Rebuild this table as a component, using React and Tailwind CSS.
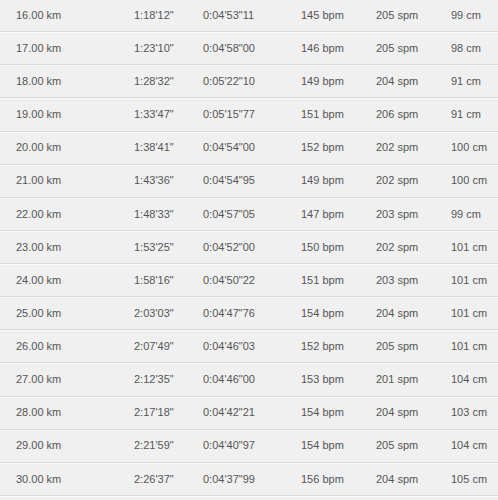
const rows = [
	['16.00 km', '1:18\'12"', '0:04\'53"11', '145 bpm', '205 spm', '99 cm'],
	['17.00 km', '1:23\'10"', '0:04\'58"00', '146 bpm', '205 spm', '98 cm'],
	['18.00 km', '1:28\'32"', '0:05\'22"10', '149 bpm', '204 spm', '91 cm'],
	['19.00 km', '1:33\'47"', '0:05\'15"77', '151 bpm', '206 spm', '91 cm'],
	['20.00 km', '1:38\'41"', '0:04\'54"00', '152 bpm', '202 spm', '100 cm'],
	['21.00 km', '1:43\'36"', '0:04\'54"95', '149 bpm', '202 spm', '100 cm'],
	['22.00 km', '1:48\'33"', '0:04\'57"05', '147 bpm', '203 spm', '99 cm'],
	['23.00 km', '1:53\'25"', '0:04\'52"00', '150 bpm', '202 spm', '101 cm'],
	['24.00 km', '1:58\'16"', '0:04\'50"22', '151 bpm', '203 spm', '101 cm'],
	['25.00 km', '2:03\'03"', '0:04\'47"76', '154 bpm', '204 spm', '101 cm'],
	['26.00 km', '2:07\'49"', '0:04\'46"03', '152 bpm', '205 spm', '101 cm'],
	['27.00 km', '2:12\'35"', '0:04\'46"00', '153 bpm', '201 spm', '104 cm'],
	['28.00 km', '2:17\'18"', '0:04\'42"21', '154 bpm', '204 spm', '103 cm'],
	['29.00 km', '2:21\'59"', '0:04\'40"97', '154 bpm', '205 spm', '104 cm'],
	['30.00 km', '2:26\'37"', '0:04\'37"99', '156 bpm', '204 spm', '105 cm'],
];

export default function App() {
	return (
		<div className="w-[498px] h-[500px] overflow-hidden bg-[#f0f0f0]">
			{/* Split table */}
			<div className="-mt-px">
				{rows.map((row, i) => (
					<div
						key={i}
						className="grid grid-cols-[118px_69px_98px_75px_75px_1fr] items-center h-[33.13px] pl-4 border-b border-b-[#d9d9d9] shadow-[0_1px_0_#fafafa] text-[11px] text-[#555] font-['Liberation_Sans',Arial,sans-serif]"
					>
						{row.map((cell, j) => (
							<span key={j} className="whitespace-nowrap">
								{cell}
							</span>
						))}
					</div>
				))}
			</div>
		</div>
	);
}
